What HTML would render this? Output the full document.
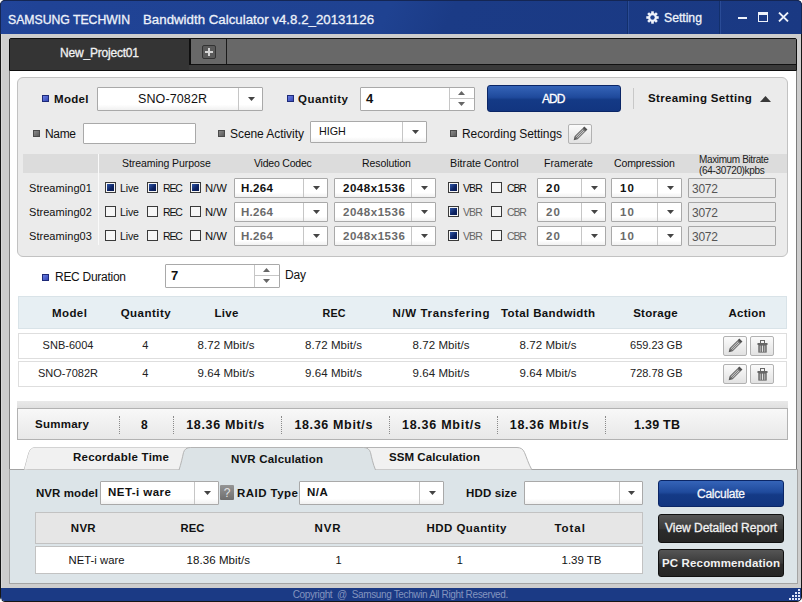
<!DOCTYPE html>
<html><head><meta charset="utf-8">
<style>
*{box-sizing:border-box;margin:0;padding:0}
html,body{width:802px;height:602px;overflow:hidden;background:#fff}
body{position:relative;font-family:"Liberation Sans",sans-serif;font-size:12px;color:#111}
.a{position:absolute}
.t{position:absolute;white-space:nowrap;line-height:1}
</style></head><body>
<div class="a" style="left:0px;top:0px;width:802px;height:602px;background:#cdcdcd;border:1px solid #161616;border-radius:5px 5px 5px 5px"></div>
<div class="a" style="left:1px;top:1px;width:1px;height:600px;background:#d8d8d8"></div>
<div class="a" style="left:0px;top:0px;width:802px;height:34px;background:linear-gradient(115deg,#21449a 0%,#204396 5%,#1f4291 48%,#1b3b86 56%,#1a3983 100%);border:1px solid #142654;border-bottom:none;border-radius:5px 5px 0 0"></div>
<div class="t" style="top:14px;font-size:12.25px;color:#eef2fa;letter-spacing:-0.02px;left:8px;-webkit-text-stroke:0.3px currentColor">SAMSUNG TECHWIN</div>
<div class="t" style="top:13px;font-size:13.25px;color:#eef2fa;letter-spacing:0.02px;left:143px;-webkit-text-stroke:0.3px currentColor">Bandwidth Calculator v4.8.2_20131126</div>
<div class="a" style="left:627px;top:1px;width:1px;height:33px;background:#13306c"></div>
<div class="a" style="left:628px;top:1px;width:1px;height:33px;background:#2a4b96"></div>
<div class="a" style="left:719px;top:1px;width:1px;height:33px;background:#13306c"></div>
<div class="a" style="left:720px;top:1px;width:1px;height:33px;background:#2a4b96"></div>
<svg class="a" style="left:646px;top:11px" width="13" height="13" viewBox="0 0 13 13"><g fill="#eef2fa"><circle cx="6.5" cy="6.5" r="4.4"/><rect x="5.2" y="0.3" width="2.6" height="12.4"/><rect x="0.3" y="5.2" width="12.4" height="2.6"/><rect x="5.2" y="0.3" width="2.6" height="12.4" transform="rotate(45 6.5 6.5)"/><rect x="5.2" y="0.3" width="2.6" height="12.4" transform="rotate(-45 6.5 6.5)"/></g><circle cx="6.5" cy="6.5" r="2.2" fill="#1e4190"/></svg>
<div class="t" style="top:12px;font-size:12.25px;color:#eef2fa;letter-spacing:-0.03px;left:664px;-webkit-text-stroke:0.3px currentColor">Setting</div>
<div class="a" style="left:738px;top:17px;width:9px;height:2px;background:#eef2fa"></div>
<div class="a" style="left:758px;top:12px;width:10px;height:10px;border:1px solid #eef2fa;border-top-width:3px"></div>
<svg class="a" style="left:778px;top:12px" width="11" height="10" viewBox="0 0 11 10"><path d="M1 0.6L10 9.4M10 0.6L1 9.4" stroke="#eef2fa" stroke-width="1.9"/></svg>
<div class="a" style="left:9px;top:38px;width:788px;height:33px;background:#3a3a3a;border:1px solid #0e0e0e;border-radius:2px 2px 0 0"></div>
<div class="a" style="left:191px;top:39px;width:605px;height:25px;background:#686868"></div>
<div class="a" style="left:191px;top:64px;width:605px;height:1px;background:#111"></div>
<div class="a" style="left:10px;top:39px;width:179px;height:31px;background:#343434"></div>
<div class="a" style="left:189px;top:39px;width:2px;height:26px;background:#0e0e0e"></div>
<div class="a" style="left:226px;top:39px;width:1px;height:25px;background:#1a1a1a"></div>
<div class="t" style="top:47px;font-size:12.0px;color:#f2f2f2;letter-spacing:-0.20px;left:60px;-webkit-text-stroke:0.3px currentColor">New_Project01</div>
<div class="a" style="left:202px;top:45px;width:14px;height:14px;background:#5a5a5a;border:1px solid #333;border-radius:2px"></div>
<div class="a" style="left:205px;top:51px;width:8px;height:2px;background:#d4d4d4"></div>
<div class="a" style="left:208px;top:48px;width:2px;height:8px;background:#d4d4d4"></div>
<div class="a" style="left:9px;top:71px;width:788px;height:513px;background:#fff;border-left:1px solid #7c7c7c;border-right:1px solid #7c7c7c"></div>
<div class="a" style="left:17px;top:77px;width:771px;height:180px;background:#ebebeb;border:1px solid #c2c2c2;border-radius:6px"></div>
<div class="a" style="left:42px;top:95px;width:7px;height:7px;background:linear-gradient(135deg,#6a7ee0,#3548b8);border:1px solid #1e2a78"></div>
<div class="t" style="top:94px;font-size:11.5px;color:#111;font-weight:bold;letter-spacing:0.30px;left:54px;">Model</div>
<div class="a" style="left:97px;top:87px;width:166px;height:24px;background:linear-gradient(#fff 75%,#f1f1f1);border:1px solid #a9a9a9;border-radius:1px"></div>
<div class="a" style="left:238px;top:88px;width:1px;height:22px;background:#c6c6c6"></div>
<div class="a" style="left:248px;top:97px;width:7px;height:4px;background:#444;clip-path:polygon(0 0,100% 0,50% 100%)"></div>
<div class="t" style="top:93px;font-size:12.5px;color:#111;letter-spacing:0.11px;left:138px;">SNO-7082R</div>
<div class="a" style="left:287px;top:95px;width:7px;height:7px;background:linear-gradient(135deg,#6a7ee0,#3548b8);border:1px solid #1e2a78"></div>
<div class="t" style="top:94px;font-size:11.5px;color:#111;font-weight:bold;letter-spacing:0.47px;left:298px;">Quantity</div>
<div class="a" style="left:360px;top:87px;width:115px;height:24px;background:#fff;border:1px solid #a9a9a9;border-radius:1px"></div>
<div class="a" style="left:449px;top:88px;width:1px;height:22px;background:#c6c6c6"></div>
<div class="a" style="left:450px;top:98px;width:24px;height:1px;background:#c6c6c6"></div>
<div class="a" style="left:458px;top:91px;width:7px;height:4px;background:#666;clip-path:polygon(50% 0,100% 100%,0 100%)"></div>
<div class="a" style="left:458px;top:102px;width:7px;height:4px;background:#666;clip-path:polygon(0 0,100% 0,50% 100%)"></div>
<div class="t" style="top:92px;font-size:13px;color:#111;font-weight:bold;left:366px;">4</div>
<div class="a" style="left:487px;top:85px;width:134px;height:27px;background:linear-gradient(#3564b8,#1f4a9c 45%,#143a86 55%,#123580);border:1px solid #0b2666;border-radius:3px"></div>
<div class="t" style="top:93px;font-size:12.0px;color:#fff;letter-spacing:-0.94px;left:542px;-webkit-text-stroke:0.3px currentColor">ADD</div>
<div class="a" style="left:633px;top:88px;width:1px;height:21px;background:#c8c8c8"></div>
<div class="t" style="top:93px;font-size:11.5px;color:#111;font-weight:bold;letter-spacing:0.34px;left:648px;">Streaming Setting</div>
<div class="a" style="left:760px;top:96px;width:11px;height:6px;background:#383838;clip-path:polygon(50% 0,100% 100%,0 100%)"></div>
<div class="a" style="left:33px;top:130px;width:7px;height:7px;background:linear-gradient(135deg,#8a8a8a,#5a5a5a);border:1px solid #4a4a4a"></div>
<div class="t" style="top:128px;font-size:12.0px;color:#111;letter-spacing:-0.35px;left:45px;">Name</div>
<div class="a" style="left:83px;top:123px;width:113px;height:21px;background:#fff;border:1px solid #a9a9a9;border-radius:1px"></div>
<div class="a" style="left:218px;top:130px;width:7px;height:7px;background:linear-gradient(135deg,#8a8a8a,#5a5a5a);border:1px solid #4a4a4a"></div>
<div class="t" style="top:128px;font-size:12.0px;color:#111;letter-spacing:-0.06px;left:230px;">Scene Activity</div>
<div class="a" style="left:310px;top:121px;width:117px;height:22px;background:linear-gradient(#fff 75%,#f1f1f1);border:1px solid #a9a9a9;border-radius:1px"></div>
<div class="a" style="left:402px;top:122px;width:1px;height:20px;background:#c6c6c6"></div>
<div class="a" style="left:412px;top:130px;width:7px;height:4px;background:#444;clip-path:polygon(0 0,100% 0,50% 100%)"></div>
<div class="t" style="top:126px;font-size:10.75px;color:#111;left:319px;">HIGH</div>
<div class="a" style="left:450px;top:130px;width:7px;height:7px;background:linear-gradient(135deg,#8a8a8a,#5a5a5a);border:1px solid #4a4a4a"></div>
<div class="t" style="top:128px;font-size:12.0px;color:#111;letter-spacing:-0.08px;left:462px;">Recording Settings</div>
<div class="a" style="left:568px;top:124px;width:24px;height:20px;background:linear-gradient(#fbfbfb,#e2e2e2);border:1px solid #b2b2b2;border-radius:2px"></div>
<svg class="a" style="left:572px;top:125px" width="18" height="18" viewBox="0 0 18 18"><g transform="translate(1.7 15.2) rotate(-45)"><path d="M0 0 L3.4 -2.2 L3.4 2.2 Z" fill="#5a5a5a"/><rect x="3.4" y="-2.2" width="11.4" height="4.4" fill="#666"/><rect x="4.2" y="-1.15" width="9.8" height="0.8" fill="#d6d6d6"/><rect x="4.2" y="0.45" width="9.8" height="0.8" fill="#d6d6d6"/><rect x="14.8" y="-2.2" width="2.4" height="4.4" fill="#505050"/></g></svg>
<div class="a" style="left:23px;top:154px;width:764px;height:19px;background:#dcdcdc"></div>
<div class="a" style="left:98px;top:154px;width:1px;height:91px;background:#fafafa"></div>
<div class="t" style="top:158px;font-size:10.5px;color:#111;letter-spacing:-0.07px;left:122px;">Streaming Purpose</div>
<div class="t" style="top:158px;font-size:10.5px;color:#111;letter-spacing:-0.21px;left:254px;">Video Codec</div>
<div class="t" style="top:158px;font-size:10.5px;color:#111;letter-spacing:-0.09px;left:362px;">Resolution</div>
<div class="t" style="top:158px;font-size:10.75px;color:#111;left:450px;">Bitrate Control</div>
<div class="t" style="top:158px;font-size:10.5px;color:#111;letter-spacing:0.05px;left:544px;">Framerate</div>
<div class="t" style="top:158px;font-size:10.5px;color:#111;letter-spacing:-0.10px;left:614px;">Compression</div>
<div class="t" style="top:155px;font-size:10.0px;color:#222;letter-spacing:-0.37px;left:699px;">Maximum Bitrate</div>
<div class="t" style="top:166px;font-size:10.0px;color:#222;letter-spacing:-0.33px;left:699px;">(64-30720)kpbs</div>
<div class="t" style="top:183px;font-size:11.0px;color:#111;letter-spacing:0.05px;left:29px;">Streaming01</div>
<div class="a" style="left:105px;top:182px;width:11px;height:11px;background:#f6f6f6;border:1px solid #3a3a3a"></div>
<div class="a" style="left:107px;top:184px;width:7px;height:7px;background:linear-gradient(135deg,#2f56a8,#0c2262 60%,#091a52)"></div>
<div class="t" style="top:183px;font-size:10.5px;color:#111;letter-spacing:-0.14px;left:120px;">Live</div>
<div class="a" style="left:147px;top:182px;width:11px;height:11px;background:#f6f6f6;border:1px solid #3a3a3a"></div>
<div class="a" style="left:149px;top:184px;width:7px;height:7px;background:linear-gradient(135deg,#2f56a8,#0c2262 60%,#091a52)"></div>
<div class="t" style="top:183px;font-size:10.5px;color:#111;letter-spacing:-1.17px;left:163px;">REC</div>
<div class="a" style="left:190px;top:182px;width:11px;height:11px;background:#f6f6f6;border:1px solid #3a3a3a"></div>
<div class="a" style="left:192px;top:184px;width:7px;height:7px;background:linear-gradient(135deg,#2f56a8,#0c2262 60%,#091a52)"></div>
<div class="t" style="top:183px;font-size:11.25px;color:#111;left:205px;">N/W</div>
<div class="a" style="left:234px;top:178px;width:94px;height:20px;background:linear-gradient(#fff 75%,#f1f1f1);border:1px solid #a9a9a9;border-radius:1px"></div>
<div class="a" style="left:303px;top:179px;width:1px;height:18px;background:#c6c6c6"></div>
<div class="a" style="left:313px;top:186px;width:7px;height:4px;background:#444;clip-path:polygon(0 0,100% 0,50% 100%)"></div>
<div class="t" style="top:183px;font-size:11.5px;color:#111;font-weight:bold;letter-spacing:0.31px;left:241px;">H.264</div>
<div class="a" style="left:334px;top:178px;width:102px;height:20px;background:linear-gradient(#fff 75%,#f1f1f1);border:1px solid #a9a9a9;border-radius:1px"></div>
<div class="a" style="left:411px;top:179px;width:1px;height:18px;background:#c6c6c6"></div>
<div class="a" style="left:421px;top:186px;width:7px;height:4px;background:#444;clip-path:polygon(0 0,100% 0,50% 100%)"></div>
<div class="t" style="top:183px;font-size:11.5px;color:#111;font-weight:bold;letter-spacing:0.54px;left:343px;">2048x1536</div>
<div class="a" style="left:448px;top:182px;width:11px;height:11px;background:#f6f6f6;border:1px solid #3a3a3a"></div>
<div class="a" style="left:450px;top:184px;width:7px;height:7px;background:linear-gradient(135deg,#2f56a8,#0c2262 60%,#091a52)"></div>
<div class="t" style="top:183px;font-size:10.5px;color:#111;letter-spacing:-0.88px;left:463px;">VBR</div>
<div class="a" style="left:491px;top:182px;width:11px;height:11px;background:#f6f6f6;border:1px solid #3a3a3a"></div>
<div class="t" style="top:183px;font-size:10.5px;color:#111;letter-spacing:-1.17px;left:507px;">CBR</div>
<div class="a" style="left:537px;top:178px;width:69px;height:20px;background:linear-gradient(#fff 75%,#f1f1f1);border:1px solid #a9a9a9;border-radius:1px"></div>
<div class="a" style="left:581px;top:179px;width:1px;height:18px;background:#c6c6c6"></div>
<div class="a" style="left:591px;top:186px;width:7px;height:4px;background:#444;clip-path:polygon(0 0,100% 0,50% 100%)"></div>
<div class="t" style="top:183px;font-size:11.5px;color:#111;font-weight:bold;letter-spacing:1.11px;left:546px;">20</div>
<div class="a" style="left:611px;top:178px;width:71px;height:20px;background:linear-gradient(#fff 75%,#f1f1f1);border:1px solid #a9a9a9;border-radius:1px"></div>
<div class="a" style="left:657px;top:179px;width:1px;height:18px;background:#c6c6c6"></div>
<div class="a" style="left:667px;top:186px;width:7px;height:4px;background:#444;clip-path:polygon(0 0,100% 0,50% 100%)"></div>
<div class="t" style="top:183px;font-size:11.5px;color:#111;font-weight:bold;letter-spacing:1.11px;left:620px;">10</div>
<div class="a" style="left:688px;top:178px;width:88px;height:20px;background:#ebebeb;border:1px solid #a6a6a6;border-radius:1px"></div>
<div class="t" style="top:183px;font-size:12.0px;color:#555;letter-spacing:-0.25px;left:692px;">3072</div>
<div class="t" style="top:207px;font-size:11.0px;color:#111;letter-spacing:0.05px;left:29px;">Streaming02</div>
<div class="a" style="left:105px;top:206px;width:11px;height:11px;background:#f6f6f6;border:1px solid #3a3a3a"></div>
<div class="t" style="top:207px;font-size:10.5px;color:#111;letter-spacing:-0.14px;left:120px;">Live</div>
<div class="a" style="left:147px;top:206px;width:11px;height:11px;background:#f6f6f6;border:1px solid #3a3a3a"></div>
<div class="t" style="top:207px;font-size:10.5px;color:#111;letter-spacing:-1.17px;left:163px;">REC</div>
<div class="a" style="left:190px;top:206px;width:11px;height:11px;background:#f6f6f6;border:1px solid #3a3a3a"></div>
<div class="t" style="top:207px;font-size:11.25px;color:#111;left:205px;">N/W</div>
<div class="a" style="left:234px;top:202px;width:94px;height:20px;background:linear-gradient(#fff 75%,#f1f1f1);border:1px solid #a9a9a9;border-radius:1px"></div>
<div class="a" style="left:303px;top:203px;width:1px;height:18px;background:#c6c6c6"></div>
<div class="a" style="left:313px;top:210px;width:7px;height:4px;background:#444;clip-path:polygon(0 0,100% 0,50% 100%)"></div>
<div class="t" style="top:207px;font-size:11.5px;color:#6a6a6a;font-weight:bold;letter-spacing:0.31px;left:241px;">H.264</div>
<div class="a" style="left:334px;top:202px;width:102px;height:20px;background:linear-gradient(#fff 75%,#f1f1f1);border:1px solid #a9a9a9;border-radius:1px"></div>
<div class="a" style="left:411px;top:203px;width:1px;height:18px;background:#c6c6c6"></div>
<div class="a" style="left:421px;top:210px;width:7px;height:4px;background:#444;clip-path:polygon(0 0,100% 0,50% 100%)"></div>
<div class="t" style="top:207px;font-size:11.5px;color:#6a6a6a;font-weight:bold;letter-spacing:0.54px;left:343px;">2048x1536</div>
<div class="a" style="left:448px;top:206px;width:11px;height:11px;background:#f6f6f6;border:1px solid #3a3a3a"></div>
<div class="a" style="left:450px;top:208px;width:7px;height:7px;background:linear-gradient(135deg,#2f56a8,#0c2262 60%,#091a52)"></div>
<div class="t" style="top:207px;font-size:10.5px;color:#666;letter-spacing:-0.88px;left:463px;">VBR</div>
<div class="a" style="left:491px;top:206px;width:11px;height:11px;background:#f6f6f6;border:1px solid #3a3a3a"></div>
<div class="t" style="top:207px;font-size:10.5px;color:#666;letter-spacing:-1.17px;left:507px;">CBR</div>
<div class="a" style="left:537px;top:202px;width:69px;height:20px;background:linear-gradient(#fff 75%,#f1f1f1);border:1px solid #a9a9a9;border-radius:1px"></div>
<div class="a" style="left:581px;top:203px;width:1px;height:18px;background:#c6c6c6"></div>
<div class="a" style="left:591px;top:210px;width:7px;height:4px;background:#444;clip-path:polygon(0 0,100% 0,50% 100%)"></div>
<div class="t" style="top:207px;font-size:11.5px;color:#6a6a6a;font-weight:bold;letter-spacing:1.11px;left:546px;">20</div>
<div class="a" style="left:611px;top:202px;width:71px;height:20px;background:linear-gradient(#fff 75%,#f1f1f1);border:1px solid #a9a9a9;border-radius:1px"></div>
<div class="a" style="left:657px;top:203px;width:1px;height:18px;background:#c6c6c6"></div>
<div class="a" style="left:667px;top:210px;width:7px;height:4px;background:#444;clip-path:polygon(0 0,100% 0,50% 100%)"></div>
<div class="t" style="top:207px;font-size:11.5px;color:#6a6a6a;font-weight:bold;letter-spacing:1.11px;left:620px;">10</div>
<div class="a" style="left:688px;top:202px;width:88px;height:20px;background:#ebebeb;border:1px solid #a6a6a6;border-radius:1px"></div>
<div class="t" style="top:207px;font-size:12.0px;color:#555;letter-spacing:-0.25px;left:692px;">3072</div>
<div class="t" style="top:231px;font-size:11.0px;color:#111;letter-spacing:0.05px;left:29px;">Streaming03</div>
<div class="a" style="left:105px;top:230px;width:11px;height:11px;background:#f6f6f6;border:1px solid #3a3a3a"></div>
<div class="t" style="top:231px;font-size:10.5px;color:#111;letter-spacing:-0.14px;left:120px;">Live</div>
<div class="a" style="left:147px;top:230px;width:11px;height:11px;background:#f6f6f6;border:1px solid #3a3a3a"></div>
<div class="t" style="top:231px;font-size:10.5px;color:#111;letter-spacing:-1.17px;left:163px;">REC</div>
<div class="a" style="left:190px;top:230px;width:11px;height:11px;background:#f6f6f6;border:1px solid #3a3a3a"></div>
<div class="t" style="top:231px;font-size:11.25px;color:#111;left:205px;">N/W</div>
<div class="a" style="left:234px;top:226px;width:94px;height:20px;background:linear-gradient(#fff 75%,#f1f1f1);border:1px solid #a9a9a9;border-radius:1px"></div>
<div class="a" style="left:303px;top:227px;width:1px;height:18px;background:#c6c6c6"></div>
<div class="a" style="left:313px;top:234px;width:7px;height:4px;background:#444;clip-path:polygon(0 0,100% 0,50% 100%)"></div>
<div class="t" style="top:231px;font-size:11.5px;color:#6a6a6a;font-weight:bold;letter-spacing:0.31px;left:241px;">H.264</div>
<div class="a" style="left:334px;top:226px;width:102px;height:20px;background:linear-gradient(#fff 75%,#f1f1f1);border:1px solid #a9a9a9;border-radius:1px"></div>
<div class="a" style="left:411px;top:227px;width:1px;height:18px;background:#c6c6c6"></div>
<div class="a" style="left:421px;top:234px;width:7px;height:4px;background:#444;clip-path:polygon(0 0,100% 0,50% 100%)"></div>
<div class="t" style="top:231px;font-size:11.5px;color:#6a6a6a;font-weight:bold;letter-spacing:0.54px;left:343px;">2048x1536</div>
<div class="a" style="left:448px;top:230px;width:11px;height:11px;background:#f6f6f6;border:1px solid #3a3a3a"></div>
<div class="a" style="left:450px;top:232px;width:7px;height:7px;background:linear-gradient(135deg,#2f56a8,#0c2262 60%,#091a52)"></div>
<div class="t" style="top:231px;font-size:10.5px;color:#666;letter-spacing:-0.88px;left:463px;">VBR</div>
<div class="a" style="left:491px;top:230px;width:11px;height:11px;background:#f6f6f6;border:1px solid #3a3a3a"></div>
<div class="t" style="top:231px;font-size:10.5px;color:#666;letter-spacing:-1.17px;left:507px;">CBR</div>
<div class="a" style="left:537px;top:226px;width:69px;height:20px;background:linear-gradient(#fff 75%,#f1f1f1);border:1px solid #a9a9a9;border-radius:1px"></div>
<div class="a" style="left:581px;top:227px;width:1px;height:18px;background:#c6c6c6"></div>
<div class="a" style="left:591px;top:234px;width:7px;height:4px;background:#444;clip-path:polygon(0 0,100% 0,50% 100%)"></div>
<div class="t" style="top:231px;font-size:11.5px;color:#6a6a6a;font-weight:bold;letter-spacing:1.11px;left:546px;">20</div>
<div class="a" style="left:611px;top:226px;width:71px;height:20px;background:linear-gradient(#fff 75%,#f1f1f1);border:1px solid #a9a9a9;border-radius:1px"></div>
<div class="a" style="left:657px;top:227px;width:1px;height:18px;background:#c6c6c6"></div>
<div class="a" style="left:667px;top:234px;width:7px;height:4px;background:#444;clip-path:polygon(0 0,100% 0,50% 100%)"></div>
<div class="t" style="top:231px;font-size:11.5px;color:#6a6a6a;font-weight:bold;letter-spacing:1.11px;left:620px;">10</div>
<div class="a" style="left:688px;top:226px;width:88px;height:20px;background:#ebebeb;border:1px solid #a6a6a6;border-radius:1px"></div>
<div class="t" style="top:231px;font-size:12.0px;color:#555;letter-spacing:-0.25px;left:692px;">3072</div>
<div class="a" style="left:42px;top:274px;width:7px;height:7px;background:linear-gradient(135deg,#6a7ee0,#3548b8);border:1px solid #1e2a78"></div>
<div class="t" style="top:271px;font-size:12.0px;color:#111;letter-spacing:-0.28px;left:55px;">REC Duration</div>
<div class="a" style="left:165px;top:264px;width:115px;height:24px;background:#fff;border:1px solid #a9a9a9;border-radius:1px"></div>
<div class="a" style="left:254px;top:265px;width:1px;height:22px;background:#c6c6c6"></div>
<div class="a" style="left:255px;top:275px;width:24px;height:1px;background:#c6c6c6"></div>
<div class="a" style="left:263px;top:268px;width:7px;height:4px;background:#666;clip-path:polygon(50% 0,100% 100%,0 100%)"></div>
<div class="a" style="left:263px;top:279px;width:7px;height:4px;background:#666;clip-path:polygon(0 0,100% 0,50% 100%)"></div>
<div class="t" style="top:269px;font-size:13px;color:#111;font-weight:bold;left:171px;">7</div>
<div class="t" style="top:269px;font-size:12.0px;color:#111;letter-spacing:-0.19px;left:285px;">Day</div>
<div class="a" style="left:18px;top:296px;width:769px;height:33px;background:#e7eff3;border:1px solid #d9e3e8"></div>
<div class="t" style="top:308px;font-size:11.5px;color:#111;font-weight:bold;letter-spacing:0.42px;left:-80.39px;width:300px;text-align:center;">Model</div>
<div class="t" style="top:308px;font-size:11.5px;color:#111;font-weight:bold;letter-spacing:0.47px;left:-4.17px;width:300px;text-align:center;">Quantity</div>
<div class="t" style="top:308px;font-size:11.5px;color:#111;font-weight:bold;letter-spacing:0.30px;left:76.65px;width:300px;text-align:center;">Live</div>
<div class="t" style="top:308px;font-size:10.75px;color:#111;font-weight:bold;letter-spacing:0.08px;left:184.04px;width:300px;text-align:center;">REC</div>
<div class="t" style="top:308px;font-size:11.5px;color:#111;font-weight:bold;letter-spacing:0.62px;left:291.31px;width:300px;text-align:center;">N/W Transfering</div>
<div class="t" style="top:308px;font-size:11.5px;color:#111;font-weight:bold;letter-spacing:0.38px;left:398.19px;width:300px;text-align:center;">Total Bandwidth</div>
<div class="t" style="top:308px;font-size:11.5px;color:#111;font-weight:bold;letter-spacing:0.26px;left:505.53px;width:300px;text-align:center;">Storage</div>
<div class="t" style="top:308px;font-size:11.5px;color:#111;font-weight:bold;letter-spacing:0.23px;left:597.11px;width:300px;text-align:center;">Action</div>
<div class="a" style="left:18px;top:333px;width:769px;height:26px;background:#fff;border:1px solid #dedede"></div>
<div class="t" style="top:340px;font-size:11px;color:#222;left:-82.00px;width:300px;text-align:center;">SNB-6004</div>
<div class="t" style="top:340px;font-size:11px;color:#222;left:-4.70px;width:300px;text-align:center;">4</div>
<div class="t" style="top:340px;font-size:11.5px;color:#222;letter-spacing:0.07px;left:76.03px;width:300px;text-align:center;">8.72 Mbit/s</div>
<div class="t" style="top:340px;font-size:11.5px;color:#222;letter-spacing:0.07px;left:183.53px;width:300px;text-align:center;">8.72 Mbit/s</div>
<div class="t" style="top:340px;font-size:11.5px;color:#222;letter-spacing:0.07px;left:291.03px;width:300px;text-align:center;">8.72 Mbit/s</div>
<div class="t" style="top:340px;font-size:11.5px;color:#222;letter-spacing:0.07px;left:398.03px;width:300px;text-align:center;">8.72 Mbit/s</div>
<div class="t" style="top:340px;font-size:11.0px;color:#222;letter-spacing:-0.03px;left:506.29px;width:300px;text-align:center;">659.23 GB</div>
<div class="a" style="left:723px;top:336px;width:24px;height:20px;background:linear-gradient(#fbfbfb,#e2e2e2);border:1px solid #b2b2b2;border-radius:2px"></div>
<svg class="a" style="left:727px;top:337px" width="18" height="18" viewBox="0 0 18 18"><g transform="translate(1.7 15.2) rotate(-45)"><path d="M0 0 L3.4 -2.2 L3.4 2.2 Z" fill="#5a5a5a"/><rect x="3.4" y="-2.2" width="11.4" height="4.4" fill="#666"/><rect x="4.2" y="-1.15" width="9.8" height="0.8" fill="#d6d6d6"/><rect x="4.2" y="0.45" width="9.8" height="0.8" fill="#d6d6d6"/><rect x="14.8" y="-2.2" width="2.4" height="4.4" fill="#505050"/></g></svg>
<div class="a" style="left:750px;top:336px;width:24px;height:20px;background:linear-gradient(#fbfbfb,#e2e2e2);border:1px solid #b2b2b2;border-radius:2px"></div>
<svg class="a" style="left:757px;top:340px" width="12" height="14" viewBox="0 0 12 14"><rect x="3.5" y="0.5" width="4" height="3" fill="none" stroke="#666" stroke-width="1"/><rect x="0.5" y="3" width="10" height="2" fill="#666"/><rect x="1.3" y="5" width="8.4" height="7.6" fill="#666"/><rect x="2.6" y="5.6" width="1.6" height="6.2" fill="#a8a8a8"/><rect x="5" y="5.6" width="1" height="6.2" fill="#e0e0e0"/><rect x="6.8" y="5.6" width="1.6" height="6.2" fill="#a8a8a8"/></svg>
<div class="a" style="left:18px;top:361px;width:769px;height:26px;background:#fff;border:1px solid #dedede"></div>
<div class="t" style="top:368px;font-size:11px;color:#222;left:-82.00px;width:300px;text-align:center;">SNO-7082R</div>
<div class="t" style="top:368px;font-size:11px;color:#222;left:-4.70px;width:300px;text-align:center;">4</div>
<div class="t" style="top:368px;font-size:11.5px;color:#222;letter-spacing:0.07px;left:76.03px;width:300px;text-align:center;">9.64 Mbit/s</div>
<div class="t" style="top:368px;font-size:11.5px;color:#222;letter-spacing:0.07px;left:183.53px;width:300px;text-align:center;">9.64 Mbit/s</div>
<div class="t" style="top:368px;font-size:11.5px;color:#222;letter-spacing:0.07px;left:291.03px;width:300px;text-align:center;">9.64 Mbit/s</div>
<div class="t" style="top:368px;font-size:11.5px;color:#222;letter-spacing:0.07px;left:398.03px;width:300px;text-align:center;">9.64 Mbit/s</div>
<div class="t" style="top:368px;font-size:11.0px;color:#222;letter-spacing:-0.03px;left:506.29px;width:300px;text-align:center;">728.78 GB</div>
<div class="a" style="left:723px;top:364px;width:24px;height:20px;background:linear-gradient(#fbfbfb,#e2e2e2);border:1px solid #b2b2b2;border-radius:2px"></div>
<svg class="a" style="left:727px;top:365px" width="18" height="18" viewBox="0 0 18 18"><g transform="translate(1.7 15.2) rotate(-45)"><path d="M0 0 L3.4 -2.2 L3.4 2.2 Z" fill="#5a5a5a"/><rect x="3.4" y="-2.2" width="11.4" height="4.4" fill="#666"/><rect x="4.2" y="-1.15" width="9.8" height="0.8" fill="#d6d6d6"/><rect x="4.2" y="0.45" width="9.8" height="0.8" fill="#d6d6d6"/><rect x="14.8" y="-2.2" width="2.4" height="4.4" fill="#505050"/></g></svg>
<div class="a" style="left:750px;top:364px;width:24px;height:20px;background:linear-gradient(#fbfbfb,#e2e2e2);border:1px solid #b2b2b2;border-radius:2px"></div>
<svg class="a" style="left:757px;top:368px" width="12" height="14" viewBox="0 0 12 14"><rect x="3.5" y="0.5" width="4" height="3" fill="none" stroke="#666" stroke-width="1"/><rect x="0.5" y="3" width="10" height="2" fill="#666"/><rect x="1.3" y="5" width="8.4" height="7.6" fill="#666"/><rect x="2.6" y="5.6" width="1.6" height="6.2" fill="#a8a8a8"/><rect x="5" y="5.6" width="1" height="6.2" fill="#e0e0e0"/><rect x="6.8" y="5.6" width="1.6" height="6.2" fill="#a8a8a8"/></svg>
<div class="a" style="left:17px;top:401px;width:771px;height:8px;background:linear-gradient(#e9e9e9,#dedede)"></div>
<div class="a" style="left:17px;top:408px;width:771px;height:32px;background:linear-gradient(#f8f8f8,#e8e8e8);border:1px solid #b2b2b2"></div>
<div class="t" style="top:419px;font-size:11.5px;color:#111;font-weight:bold;letter-spacing:0.25px;left:-87.87px;width:300px;text-align:center;">Summary</div>
<div class="t" style="top:419px;font-size:12px;color:#111;font-weight:bold;left:-5.70px;width:300px;text-align:center;">8</div>
<div class="t" style="top:419px;font-size:12.5px;color:#111;font-weight:bold;letter-spacing:0.65px;left:75.62px;width:300px;text-align:center;">18.36 Mbit/s</div>
<div class="t" style="top:419px;font-size:12.5px;color:#111;font-weight:bold;letter-spacing:0.65px;left:183.72px;width:300px;text-align:center;">18.36 Mbit/s</div>
<div class="t" style="top:419px;font-size:12.5px;color:#111;font-weight:bold;letter-spacing:0.74px;left:291.87px;width:300px;text-align:center;">18.36 Mbit/s</div>
<div class="t" style="top:419px;font-size:12.5px;color:#111;font-weight:bold;letter-spacing:0.74px;left:399.57px;width:300px;text-align:center;">18.36 Mbit/s</div>
<div class="t" style="top:419px;font-size:12.5px;color:#111;font-weight:bold;letter-spacing:0.26px;left:507.13px;width:300px;text-align:center;">1.39 TB</div>
<div class="a" style="left:119px;top:416px;width:0px;height:18px;border-left:1px dotted #8a8a8a"></div>
<div class="a" style="left:173px;top:416px;width:0px;height:18px;border-left:1px dotted #8a8a8a"></div>
<div class="a" style="left:281px;top:416px;width:0px;height:18px;border-left:1px dotted #8a8a8a"></div>
<div class="a" style="left:389px;top:416px;width:0px;height:18px;border-left:1px dotted #8a8a8a"></div>
<div class="a" style="left:497px;top:416px;width:0px;height:18px;border-left:1px dotted #8a8a8a"></div>
<div class="a" style="left:605px;top:416px;width:0px;height:18px;border-left:1px dotted #8a8a8a"></div>
<div class="a" style="left:9px;top:469px;width:789px;height:115px;background:#dce4e8;border:1px solid #a4a4a4"></div>
<svg class="a" style="left:20px;top:446px" width="520" height="26" viewBox="0 0 520 26">
<path d="M4.3 23.5 C6 18 7.5 11 9 6.5 Q10.5 1.5 16 1.5 L176 1.5" fill="#f1f1f1" stroke="#b4b4b4"/>
<path d="M4.3 23.5 C6 18 7.5 11 9 6.5 Q10.5 1.5 16 1.5 L176 1.5 L176 23.5 Z" fill="#f1f1f1"/>
<path d="M340 1.5 L497 1.5 Q502.5 1.5 504.5 6.5 C506.5 11 508.5 18 511.7 23.5 L340 23.5 Z" fill="#f1f1f1"/>
<path d="M340 1.5 L497 1.5 Q502.5 1.5 504.5 6.5 C506.5 11 508.5 18 511.7 23.5" fill="none" stroke="#b4b4b4"/>
<path d="M159 24 C161 18 162.5 11 163.5 6.5 Q165 1.5 170.5 1.5 L343.5 1.5 Q349 1.5 350.5 6.5 C351.5 11 353 18 355.5 24 Z" fill="#dce3e6"/>
<path d="M159 24 C161 18 162.5 11 163.5 6.5 Q165 1.5 170.5 1.5 L343.5 1.5 Q349 1.5 350.5 6.5 C351.5 11 353 18 355.5 24" fill="none" stroke="#b4b4b4"/>
</svg>
<div class="t" style="top:452px;font-size:11.5px;color:#111;font-weight:bold;letter-spacing:0.25px;left:73px;">Recordable Time</div>
<div class="t" style="top:454px;font-size:11.5px;color:#111;font-weight:bold;letter-spacing:0.18px;left:231px;">NVR Calculation</div>
<div class="t" style="top:452px;font-size:11.5px;color:#111;font-weight:bold;letter-spacing:0.06px;left:389px;">SSM Calculation</div>
<div class="t" style="top:488px;font-size:11.5px;color:#111;font-weight:bold;letter-spacing:0.07px;left:36px;">NVR model</div>
<div class="a" style="left:100px;top:481px;width:119px;height:24px;background:linear-gradient(#fff 75%,#f1f1f1);border:1px solid #a9a9a9;border-radius:1px"></div>
<div class="a" style="left:194px;top:482px;width:1px;height:22px;background:#c6c6c6"></div>
<div class="a" style="left:204px;top:491px;width:7px;height:4px;background:#444;clip-path:polygon(0 0,100% 0,50% 100%)"></div>
<div class="t" style="top:487px;font-size:11.5px;color:#111;font-weight:bold;letter-spacing:0.46px;left:108px;">NET-i ware</div>
<div class="a" style="left:220px;top:485px;width:14px;height:15px;background:linear-gradient(#959595,#6e6e6e);border-radius:1px"></div>
<div class="t" style="top:487px;font-size:12px;color:#e4e4e4;left:77.00px;width:300px;text-align:center;">?</div>
<div class="t" style="top:488px;font-size:11.5px;color:#111;font-weight:bold;letter-spacing:0.45px;left:237px;">RAID Type</div>
<div class="a" style="left:299px;top:481px;width:145px;height:24px;background:linear-gradient(#fff 75%,#f1f1f1);border:1px solid #a9a9a9;border-radius:1px"></div>
<div class="a" style="left:419px;top:482px;width:1px;height:22px;background:#c6c6c6"></div>
<div class="a" style="left:429px;top:491px;width:7px;height:4px;background:#444;clip-path:polygon(0 0,100% 0,50% 100%)"></div>
<div class="t" style="top:487px;font-size:11.5px;color:#111;font-weight:bold;letter-spacing:0.55px;left:307px;">N/A</div>
<div class="t" style="top:488px;font-size:11.5px;color:#111;font-weight:bold;letter-spacing:0.15px;left:466px;">HDD size</div>
<div class="a" style="left:524px;top:481px;width:119px;height:24px;background:linear-gradient(#fff 75%,#f1f1f1);border:1px solid #a9a9a9;border-radius:1px"></div>
<div class="a" style="left:619px;top:482px;width:1px;height:22px;background:#c6c6c6"></div>
<div class="a" style="left:628px;top:491px;width:7px;height:4px;background:#444;clip-path:polygon(0 0,100% 0,50% 100%)"></div>
<div class="a" style="left:35px;top:512px;width:608px;height:32px;background:#e6e6e6;border:1px solid #c2c2c2"></div>
<div class="a" style="left:35px;top:546px;width:608px;height:28px;background:#fff;border:1px solid #c2c2c2"></div>
<div class="t" style="top:523px;font-size:11.5px;color:#111;font-weight:bold;letter-spacing:0.31px;left:-66.64px;width:300px;text-align:center;">NVR</div>
<div class="t" style="top:523px;font-size:11.25px;color:#111;font-weight:bold;letter-spacing:0.07px;left:42.53px;width:300px;text-align:center;">REC</div>
<div class="t" style="top:523px;font-size:11.5px;color:#111;font-weight:bold;letter-spacing:0.81px;left:177.91px;width:300px;text-align:center;">NVR</div>
<div class="t" style="top:523px;font-size:11.5px;color:#111;font-weight:bold;letter-spacing:0.47px;left:316.63px;width:300px;text-align:center;">HDD Quantity</div>
<div class="t" style="top:523px;font-size:11.5px;color:#111;font-weight:bold;letter-spacing:0.95px;left:420.17px;width:300px;text-align:center;">Total</div>
<div class="t" style="top:555px;font-size:11.25px;color:#111;letter-spacing:0.03px;left:-53.49px;width:300px;text-align:center;">NET-i ware</div>
<div class="t" style="top:555px;font-size:11.5px;color:#111;letter-spacing:0.07px;left:68.34px;width:300px;text-align:center;">18.36 Mbit/s</div>
<div class="t" style="top:555px;font-size:11px;color:#111;left:188.60px;width:300px;text-align:center;">1</div>
<div class="t" style="top:555px;font-size:11px;color:#111;left:309.80px;width:300px;text-align:center;">1</div>
<div class="t" style="top:555px;font-size:11.5px;color:#111;letter-spacing:-0.03px;left:431.49px;width:300px;text-align:center;">1.39 TB</div>
<div class="a" style="left:658px;top:480px;width:126px;height:27px;background:linear-gradient(#3564b8,#1f4a9c 45%,#143a86 55%,#123580);border:1px solid #0b2666;border-radius:3px"></div>
<div class="t" style="top:488px;font-size:12.0px;color:#f4f6fb;letter-spacing:-0.26px;left:570.87px;width:300px;text-align:center;-webkit-text-stroke:0.3px currentColor">Calculate</div>
<div class="a" style="left:658px;top:514px;width:126px;height:29px;background:linear-gradient(#555,#3a3a3a 50%,#2c2c2c 55%,#262626);border:1px solid #111;border-radius:3px"></div>
<div class="t" style="top:522px;font-size:12.0px;color:#f2f2f2;letter-spacing:-0.03px;left:570.99px;width:300px;text-align:center;-webkit-text-stroke:0.3px currentColor">View Detailed Report</div>
<div class="a" style="left:658px;top:549px;width:126px;height:28px;background:linear-gradient(#555,#3a3a3a 50%,#2c2c2c 55%,#262626);border:1px solid #111;border-radius:3px"></div>
<div class="t" style="top:558px;font-size:11.5px;color:#f2f2f2;font-weight:bold;letter-spacing:0.14px;left:571.07px;width:300px;text-align:center;">PC Recommendation</div>
<div class="a" style="left:1px;top:588px;width:800px;height:13px;background:#1b3a85;border-radius:0 0 4px 4px"></div>
<div class="a" style="left:798px;top:589px;width:2px;height:2px;background:#dfe6fa"></div>
<div class="a" style="left:795px;top:592px;width:2px;height:2px;background:#dfe6fa"></div>
<div class="a" style="left:798px;top:592px;width:2px;height:2px;background:#dfe6fa"></div>
<div class="a" style="left:792px;top:595px;width:2px;height:2px;background:#dfe6fa"></div>
<div class="a" style="left:795px;top:595px;width:2px;height:2px;background:#dfe6fa"></div>
<div class="a" style="left:798px;top:595px;width:2px;height:2px;background:#dfe6fa"></div>
<div class="a" style="left:789px;top:598px;width:2px;height:2px;background:#dfe6fa"></div>
<div class="a" style="left:792px;top:598px;width:2px;height:2px;background:#dfe6fa"></div>
<div class="a" style="left:795px;top:598px;width:2px;height:2px;background:#dfe6fa"></div>
<div class="a" style="left:798px;top:598px;width:2px;height:2px;background:#dfe6fa"></div>
<div class="t" style="top:590px;font-size:10.0px;color:#8394bf;letter-spacing:-0.36px;left:250.32px;width:300px;text-align:center;">Copyright &nbsp;@ &nbsp;Samsung Techwin All Right Reserved.</div>
</body></html>
